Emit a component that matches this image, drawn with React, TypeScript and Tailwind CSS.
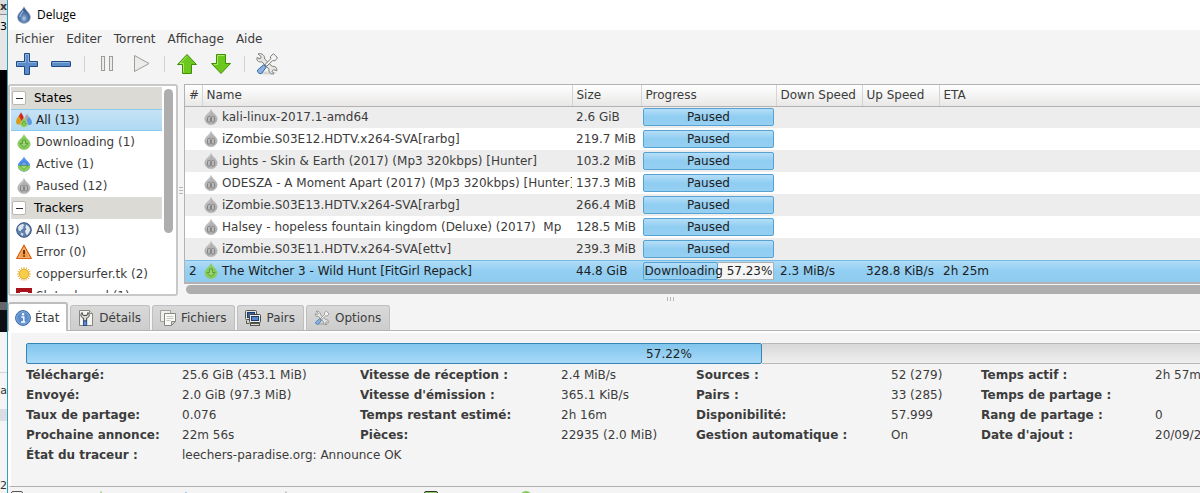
import type { ReactNode } from "react";

type IconProps = { className?: string };

const DROP = "M9 0.8C7.8 4 2.600 7.2 2.600 11.2A6.400 6.200 0 0 0 15.400 11.2C15.400 7.2 10.2 4 9 0.8Z";
const SMALL_DROP = "M8 0.5C7 3.8 1.800 6 1.800 10A6.200 5.700 0 0 0 14.200 10C14.200 6 9 3.8 8 0.5Z";

function DelugeLogo() {
  return (
    <svg className="size-[18px]" viewBox="0 0 18 18" aria-hidden="true">
      <defs>
        <radialGradient id="logo" cx="0.5" cy="0.7" r="0.6">
          <stop offset="0" stopColor="#b9d0ea" />
          <stop offset="0.35" stopColor="#6388b8" />
          <stop offset="1" stopColor="#274a80" />
        </radialGradient>
      </defs>
      <path d={DROP} fill="url(#logo)" stroke="#a8b4c4" strokeWidth="0.7" />
      <path d="M8.3 4.5C7 7 5 8.5 4.8 11" fill="none" stroke="#9db9dc" strokeWidth="1.1" />
    </svg>
  );
}

function PausedDrop({ className = "size-4" }: IconProps) {
  return (
    <svg className={className} viewBox="0 0 16 16" aria-hidden="true">
      <path d={SMALL_DROP} fill="#b2b2b2" stroke="#b4b4b4" strokeWidth="0.6" />
      <path d="M8 1.5C7 4.5 3.4 7 3.2 9.6" fill="none" stroke="#cacaca" strokeWidth="0.9" />
      <rect x="4.5" y="7.5" width="3" height="5.500" rx="1" fill="#b8b8b8" stroke="#858585" strokeWidth="1" />
      <rect x="8.5" y="7.5" width="3" height="5.500" rx="1" fill="#b8b8b8" stroke="#858585" strokeWidth="1" />
    </svg>
  );
}

function DownDrop({ className = "size-4" }: IconProps) {
  return (
    <svg className={className} viewBox="0 0 16 16" aria-hidden="true">
      <path d={SMALL_DROP} fill="#86cc58" stroke="#93c974" strokeWidth="0.6" />
      <path d="M6.5 6h3v3.500H12L8 13.5 4 9.5h2.5z" fill="#9bd670" stroke="#5c9440" strokeWidth="0.900" strokeLinejoin="round" />
    </svg>
  );
}

function ActiveDrop() {
  return (
    <svg className="size-4" viewBox="0 0 16 16" aria-hidden="true">
      <path d={SMALL_DROP} fill="#4f92ee" />
      <path d="M1.8 9.600H14.200A6.200 6 0 0 1 1.8 9.600Z" fill="#8ccf55" />
      <path d="M8 5.2L12 9.400H4Z" fill="#6fa9f2" stroke="#3c68a8" strokeWidth="0.8" strokeLinejoin="round" />
      <path d="M8 13.600L4 9.700H12Z" fill="#a3dd74" stroke="#629a45" strokeWidth="0.8" strokeLinejoin="round" />
    </svg>
  );
}

function AllDrops() {
  return (
    <svg className="size-4" viewBox="0 0 16 16" aria-hidden="true">
      <path d="M11 1.4C10.5 3 8.6 4.6 8.6 7a2.5 2.5 0 0 0 5 0C13.6 4.6 11.5 3 11 1.4Z" fill="#a9a9b4" />
      <path d="M5 0.3C4.5 2 2.3 4 2.3 6.4a2.8 2.8 0 0 0 5.6 0C7.9 4 5.5 2 5 0.3Z" fill="#d8231f" />
      <path d="M2.7 3.6C2.2 5.4 0 7.2 0 9.8a2.8 2.8 0 0 0 5.6 0C5.6 7.2 3.2 5.4 2.7 3.6Z" fill="#d99a1c" />
      <path d="M13.1 4.6C12.6 6.2 10.4 7.8 10.4 10.2a2.8 2.8 0 0 0 5.6 0C16 7.8 13.6 6.2 13.1 4.6Z" fill="#5f97e4" />
      <path d="M8 5.5C7.4 7.8 4.6 9.2 4.6 12a3.4 3.2 0 0 0 6.8 0C11.4 9.2 8.6 7.8 8 5.5Z" fill="#86cf50" stroke="#b9e39c" strokeWidth="0.5" />
      <path d="M7.2 9.5h1.6v2H10L8 13.6 6 11.5h1.2z" fill="#b0e28a" stroke="#4d8a2a" strokeWidth="0.6" />
    </svg>
  );
}

function Globe() {
  return (
    <svg className="size-4" viewBox="0 0 16 16" aria-hidden="true">
      <circle cx="8" cy="8" r="7.3" fill="#5f80ad" stroke="#34527f" strokeWidth="1" />
      <path d="M2 5.5C3 3 5 2 7 1.9L8.5 3.2 7 4.5 7.6 6 5.6 7.6 4.5 9.2 2.6 8.6Z" fill="#dce4ee" />
      <path d="M10 2.6L13 4.8 14.2 8 12.8 11 11 13.2 9.6 11.2 9 9 10.5 7.2 9.4 5.4Z" fill="#e6ebf2" />
      <path d="M4.8 10.4L7.5 11.4 7 14 4.8 13Z" fill="#cfd9e6" />
    </svg>
  );
}

function Warning() {
  return (
    <svg className="size-4" viewBox="0 0 16 16" aria-hidden="true">
      <path d="M8 1.2L15.3 14.5H0.7Z" fill="#f6963f" stroke="#d45f0a" strokeWidth="1.2" strokeLinejoin="round" />
      <path d="M8 3.6L13.4 13.4H2.6Z" fill="none" stroke="#fbc795" strokeWidth="0.7" />
      <rect x="7.2" y="6" width="1.7" height="4.3" rx="0.6" fill="#33261a" />
      <rect x="7.2" y="11.2" width="1.7" height="1.6" rx="0.6" fill="#33261a" />
    </svg>
  );
}

function Sun() {
  const rays = Array.from({ length: 16 }, (_, i) => {
    const a = (i * Math.PI) / 8;
    return { x: 8 + Math.cos(a) * 6.9, y: 8 + Math.sin(a) * 6.9 };
  });
  return (
    <svg className="size-4" viewBox="0 0 16 16" aria-hidden="true">
      {rays.map((r, i) => (
        <line key={i} x1="8" y1="8" x2={r.x} y2={r.y} stroke="#e3ae2c" strokeWidth="1" />
      ))}
      <circle cx="8" cy="8" r="4.7" fill="#f6ce48" stroke="#e0a92a" strokeWidth="0.8" />
    </svg>
  );
}

function RedBadge() {
  return (
    <svg className="size-4" viewBox="0 0 16 16" aria-hidden="true">
      <rect width="16" height="16" fill="#a8121a" />
      <path d="M4 4h8v3H9v6H7V7H4z" fill="#fff" />
    </svg>
  );
}

function Plus() {
  return (
    <svg className="size-6" viewBox="0 0 24 24" aria-hidden="true">
      <path d="M9.5 1.5h5v8h8v5h-8v8h-5v-8h-8v-5h8z" fill="#5b8cc6" stroke="#204a87" strokeLinejoin="round" />
      <path d="M10.5 10.5v-8h3v8h8M2.5 13.5v-3h8" fill="none" stroke="#8db3df" />
    </svg>
  );
}

function Minus() {
  return (
    <svg className="size-6" viewBox="0 0 24 24" aria-hidden="true">
      <rect x="2.5" y="9.5" width="19" height="5" rx="0.5" fill="#5b8cc6" stroke="#204a87" />
      <path d="M3.5 10.5h17" stroke="#8db3df" />
    </svg>
  );
}

function PauseGlyph() {
  return (
    <svg className="size-6" viewBox="0 0 24 24" aria-hidden="true">
      <rect x="6.5" y="4.5" width="3" height="14" fill="#ececea" stroke="#9b9d98" />
      <rect x="14.5" y="4.5" width="3" height="14" fill="#ececea" stroke="#9b9d98" />
    </svg>
  );
}

function PlayGlyph() {
  return (
    <svg className="size-6" viewBox="0 0 24 24" aria-hidden="true">
      <path d="M5.5 3.5v16L20 11.5z" fill="#ececea" stroke="#9b9d98" strokeLinejoin="round" />
    </svg>
  );
}

function ArrowUp() {
  return (
    <svg className="size-6" viewBox="0 0 24 24" aria-hidden="true">
      <path d="M12 2.5L21.5 12.5H16.5V21.5H7.5V12.5H2.5Z" fill="#6cc81c" stroke="#3f8f05" strokeLinejoin="round" />
      <path d="M12 4.2L5 11.5H8.5V20.5" fill="none" stroke="#a9e66c" />
    </svg>
  );
}

function ArrowDown() {
  return (
    <svg className="size-6" viewBox="0 0 24 24" aria-hidden="true">
      <path d="M12 21.5L21.5 11.5H16.5V2.5H7.5V11.5H2.5Z" fill="#6cc81c" stroke="#3f8f05" strokeLinejoin="round" />
      <path d="M5 12.5H8.5V3.5H15.5" fill="none" stroke="#a9e66c" />
    </svg>
  );
}

function Tools({ className = "size-6" }: IconProps) {
  return (
    <svg className={className} viewBox="0 0 24 24" aria-hidden="true">
      <ellipse cx="13" cy="21" rx="8" ry="1.6" fill="#000" opacity="0.12" />
      <path
        d="M3 1.8L6.2 4.8 5.2 6.8 2 5.6C1.2 8.4 3.6 10.6 6.8 9.8L14 17.2C13.4 20 15.6 22.6 18.8 21.8L17 19.2 18.6 17.6 21.8 18.8C22.4 16 20 13.8 17.2 14.4L9.6 7C10.2 3.6 6.6 0.8 3 1.8Z"
        fill="#e6e6e3"
        stroke="#7b7d78"
        strokeLinejoin="round"
      />
      <path
        d="M18.400 1.800L15.400 4.600 15.800 6.800 10 12.6 11.8 14.2 17.6 8.600 20 8.800 22.400 6 20.600 3.600Z"
        fill="#f5f5f3"
        stroke="#7b7d78"
        strokeLinejoin="round"
      />
      <path d="M8.6 12.8L11.2 15.2 6.8 21.2C4.8 22.6 1.6 20.4 2.6 18Z" fill="#8cb2e0" stroke="#3465a4" strokeLinejoin="round" />
    </svg>
  );
}

function InfoIcon() {
  return (
    <svg className="size-4" viewBox="0 0 16 16" aria-hidden="true">
      <circle cx="8" cy="8" r="7.4" fill="#5b8ccb" stroke="#3565a4" />
      <circle cx="8" cy="8" r="6.3" fill="none" stroke="#92b6e2" strokeWidth="0.8" />
      <path d="M6.3 7h2.5v4.6M6 12h4.3" fill="none" stroke="#fff" strokeWidth="1.4" />
      <circle cx="8" cy="4.3" r="1.2" fill="#fff" />
    </svg>
  );
}

function DetailsIcon() {
  return (
    <svg className="size-4" viewBox="0 0 16 16" aria-hidden="true">
      <path d="M1.5 0.5h10l3 3v12h-13z" fill="#f4f4f2" stroke="#85877f" />
      <path d="M11.5 0.5v3h3" fill="#ddd" stroke="#85877f" />
      <path d="M4 2.5C2 4.5 3 7.8 5.6 8.2V11h3V8.2C11.4 7.8 12 4.5 10 2.5L9 5.4H5Z" fill="#d8d8d5" stroke="#444641" strokeLinejoin="round" />
      <rect x="5.5" y="11" width="3.2" height="4.5" fill="#5b8cc6" stroke="#204a87" strokeWidth="0.9" />
    </svg>
  );
}

function FilesIcon() {
  return (
    <svg className="size-4" viewBox="0 0 16 16" aria-hidden="true">
      <path d="M0.5 0.5h10v11h-10z" fill="#eeeeec" stroke="#a0a29c" />
      <path d="M4.5 3.5h11v8l-4 4h-7z" fill="#fafaf9" stroke="#85877f" />
      <path d="M6.5 6.5h7M6.5 8.5h7M6.5 10.5h4" stroke="#c4c6c0" />
      <path d="M15.5 11.5h-4v4z" fill="#d3d3d0" stroke="#85877f" strokeLinejoin="round" />
    </svg>
  );
}

function PeersIcon() {
  return (
    <svg className="size-4" viewBox="0 0 16 16" aria-hidden="true">
      <rect x="0.5" y="0.5" width="11" height="9" rx="1" fill="#e4e4e2" stroke="#55574f" />
      <rect x="2.5" y="2.5" width="7" height="5" fill="#37609c" stroke="#1d3c6c" />
      <path d="M1.5 10.5v3h3" fill="none" stroke="#55574f" />
      <rect x="4.5" y="4.5" width="11" height="8" rx="1" fill="#eeeeec" stroke="#44463f" />
      <rect x="6.5" y="6.5" width="7" height="4" fill="#5688cc" stroke="#1d3c6c" />
      <rect x="5.5" y="13.5" width="9" height="2" fill="#ddd" stroke="#55574f" />
    </svg>
  );
}

type Filter = { label: string; icon: ReactNode; selected?: boolean };

const groups: { title: string; items: Filter[] }[] = [
  {
    title: "States",
    items: [
      { label: "All (13)", icon: <AllDrops />, selected: true },
      { label: "Downloading (1)", icon: <DownDrop /> },
      { label: "Active (1)", icon: <ActiveDrop /> },
      { label: "Paused (12)", icon: <PausedDrop /> },
    ],
  },
  {
    title: "Trackers",
    items: [
      { label: "All (13)", icon: <Globe /> },
      { label: "Error (0)", icon: <Warning /> },
      { label: "coppersurfer.tk (2)", icon: <Sun /> },
      { label: "Slutor.broad (1)", icon: <RedBadge /> },
    ],
  },
];

type Torrent = {
  name: string;
  size: string;
  status: string;
  progress: number;
  order?: string;
  down?: string;
  up?: string;
  eta?: string;
};

const torrents: Torrent[] = [
  { name: "kali-linux-2017.1-amd64", size: "2.6 GiB", status: "Paused", progress: 100 },
  { name: "iZombie.S03E12.HDTV.x264-SVA[rarbg]", size: "219.7 MiB", status: "Paused", progress: 100 },
  { name: "Lights - Skin & Earth (2017) (Mp3 320kbps) [Hunter]", size: "103.2 MiB", status: "Paused", progress: 100 },
  { name: "ODESZA - A Moment Apart (2017) (Mp3 320kbps) [Hunter]", size: "137.3 MiB", status: "Paused", progress: 100 },
  { name: "iZombie.S03E13.HDTV.x264-SVA[rarbg]", size: "266.4 MiB", status: "Paused", progress: 100 },
  { name: "Halsey - hopeless fountain kingdom (Deluxe) (2017)  Mp", size: "128.5 MiB", status: "Paused", progress: 100 },
  { name: "iZombie.S03E11.HDTV.x264-SVA[ettv]", size: "239.3 MiB", status: "Paused", progress: 100 },
  {
    order: "2",
    name: "The Witcher 3 - Wild Hunt [FitGirl Repack]",
    size: "44.8 GiB",
    status: "Downloading 57.23%",
    progress: 57.23,
    down: "2.3 MiB/s",
    up: "328.8 KiB/s",
    eta: "2h 25m",
  },
];

const stats: [string, string][][] = [
  [["Téléchargé:", "25.6 GiB (453.1 MiB)"], ["Vitesse de réception :", "2.4 MiB/s"], ["Sources :", "52 (279)"], ["Temps actif :", "2h 57m"]],
  [["Envoyé:", "2.0 GiB (97.3 MiB)"], ["Vitesse d'émission :", "365.1 KiB/s"], ["Pairs :", "33 (285)"], ["Temps de partage :", ""]],
  [["Taux de partage:", "0.076"], ["Temps restant estimé:", "2h 16m"], ["Disponibilité:", "57.999"], ["Rang de partage :", "0"]],
  [["Prochaine annonce:", "22m 56s"], ["Pièces:", "22935 (2.0 MiB)"], ["Gestion automatique :", "On"], ["Date d'ajout :", "20/09/2017"]],
  [["État du traceur :", "leechers-paradise.org: Announce OK"]],
];

function ToolButton({ label, children }: { label: string; children: ReactNode }) {
  return (
    <button type="button" aria-label={label} className="flex h-8 w-[34px] shrink-0 items-center justify-center">
      {children}
    </button>
  );
}

function Separator() {
  return (
    <div className="flex w-3 justify-center">
      <div className="h-4 w-px bg-[#d2d2d2]" />
    </div>
  );
}

function BackgroundEdge() {
  return (
    <div className="flex w-[7px] shrink-0 flex-col overflow-hidden bg-[#f4f4f4] text-[11px] leading-[14px] text-[#333]" aria-hidden="true">
      <div className="flex h-[15px] shrink-0 justify-end border-b border-[#8a8a92] bg-[#dcdcdc] font-bold">x</div>
      <div className="flex h-[55px] shrink-0 justify-end bg-[#e6e6e6] pt-[5px] text-black">13</div>
      <div className="h-[232px] shrink-0 bg-black" />
      <div className="h-2 shrink-0 bg-[#66666a]" />
      <div className="h-[22px] shrink-0 bg-[#0d0f14]" />
      <div className="h-[41px] shrink-0 border-b border-[#d5d5d5]" />
      <div className="flex h-9 shrink-0 items-center justify-end">a</div>
      <div className="h-3 shrink-0 bg-[#dcdde3]" />
      <div className="flex grow items-end justify-end pb-0">2</div>
    </div>
  );
}

function Sidebar() {
  return (
    <nav className="flex w-[170px] shrink-0 gap-[2px] rounded-[3px] border-2 border-[#c8c8c8] bg-white p-px pr-[3px]">
      <div className="h-[206px] min-w-0 flex-1 overflow-hidden">
        {groups.map((g) => (
          <section key={g.title}>
            <h2 className="flex h-[22px] items-center gap-2 bg-[#dbdad5] pl-px text-black">
              <button
                type="button"
                aria-label={`Toggle ${g.title}`}
                className="flex size-[14px] items-center justify-center rounded-[2px] border border-[#b9b8b3] bg-white"
              >
                <span className="h-px w-[7px] bg-[#333]" />
              </button>
              {g.title}
            </h2>
            <ul>
              {g.items.map((it) => (
                <li key={it.label}>
                  <button
                    type="button"
                    className={
                      it.selected
                        ? "flex h-[22px] w-full items-center gap-1 border-y border-[#8ccbf0] bg-linear-to-b from-[#c6e3f5] to-[#afd9f2] pl-[5px] whitespace-nowrap text-[#202020]"
                        : "flex h-[22px] w-full items-center gap-1 pl-[5px] whitespace-nowrap"
                    }
                  >
                    {it.icon}
                    {it.label}
                  </button>
                </li>
              ))}
            </ul>
          </section>
        ))}
      </div>
      <div className="w-[9px] pt-[2px]">
        <div className="h-36 rounded-full bg-[#aeaeae]" />
      </div>
    </nav>
  );
}

function ProgressCell({ t }: { t: Torrent }) {
  return (
    <div className="relative flex h-[18px]">
      <div
        className="rounded-[2px] border border-[#55a2d3] bg-linear-to-b from-[#b5def8] via-[#8fcdf1] to-[#96d0f3]"
        style={{ width: `${t.progress}%` }}
      />
      {t.progress < 100 && <div className="flex-1 border border-l-0 border-[#b0b0b0] bg-[#f5f5f5]" />}
      <span className="absolute inset-0 flex items-center justify-center whitespace-nowrap text-[#222]">{t.status}</span>
    </div>
  );
}

const headers = ["#", "Name", "Size", "Progress", "Down Speed", "Up Speed", "ETA"];

function TorrentTable() {
  return (
    <div className="min-w-0 flex-1">
      <div className="border-2 border-t border-r-0 border-l border-[#b2b2b2]">
        <table className="w-full table-fixed border-collapse">
          <colgroup>
            <col className="w-[17px]" />
            <col className="w-[370px]" />
            <col className="w-[69px]" />
            <col className="w-[135px]" />
            <col className="w-[86px]" />
            <col className="w-[77px]" />
            <col />
          </colgroup>
          <thead>
            <tr className="h-[21px] bg-linear-to-b from-white to-[#e9e8e7]">
              {headers.map((h) => (
                <th
                  key={h}
                  scope="col"
                  className="overflow-hidden border-r border-b border-r-[#d4d4d4] border-b-[#b2b2b2] p-0 pl-1 text-left font-normal whitespace-nowrap last:border-r-0"
                >
                  {h}
                </th>
              ))}
            </tr>
          </thead>
          <tbody>
            {torrents.map((t) => (
              <tr
                key={t.name}
                className={
                  t.order
                    ? "h-[22px] bg-linear-to-b from-[#b3ddf7] via-[#92cff3] to-[#8ecbef] text-[#202020] inset-shadow-[0_1px_0_#74bce8]"
                    : "h-[22px] odd:bg-[#ededed] even:bg-white"
                }
              >
                <td className="p-0 pl-1">{t.order}</td>
                <td className="overflow-hidden p-0">
                  <div className="flex items-center gap-[3px] pl-px whitespace-pre">
                    {t.order ? <DownDrop className="size-4 shrink-0" /> : <PausedDrop className="size-4 shrink-0" />}
                    {t.name}
                  </div>
                </td>
                <td className="p-0 pl-1 whitespace-nowrap">{t.size}</td>
                <td className="px-[2px] py-0">
                  <ProgressCell t={t} />
                </td>
                <td className="p-0 pl-1 whitespace-nowrap">{t.down}</td>
                <td className="p-0 pl-1 whitespace-nowrap">{t.up}</td>
                <td className="p-0 pl-1 whitespace-nowrap">{t.eta}</td>
              </tr>
            ))}
          </tbody>
        </table>
      </div>
      <div className="pt-px pl-[2px]">
        <div className="h-[9px] rounded-l-full bg-[#aeaeae]" />
      </div>
    </div>
  );
}

const tabs = [
  { label: "Détails", icon: <DetailsIcon /> },
  { label: "Fichiers", icon: <FilesIcon /> },
  { label: "Pairs", icon: <PeersIcon /> },
  { label: "Options", icon: <Tools className="size-4" /> },
];

export default function App() {
  return (
    <div className="flex h-screen overflow-hidden bg-[#f4f4f4] font-['DejaVu_Sans',sans-serif] text-[12px] leading-4 text-[#3c3c3c]">
      <BackgroundEdge />
      <main className="flex min-w-0 flex-1 flex-col border-l border-[#2ba3b8]">
        <header className="flex h-[30px] shrink-0 items-center gap-1 bg-white pl-[7px] font-['Open_Sans',sans-serif] text-black">
          <DelugeLogo />
          <h1>Deluge</h1>
        </header>
        <div className="flex h-[18px] shrink-0 items-center gap-3 pl-[7px]">
          {["Fichier", "Editer", "Torrent", "Affichage", "Aide"].map((m) => (
            <button key={m} type="button">
              {m}
            </button>
          ))}
        </div>
        <div className="flex h-9 shrink-0 items-start pl-[2px]">
          <ToolButton label="Ajouter"><Plus /></ToolButton>
          <ToolButton label="Supprimer"><Minus /></ToolButton>
          <div className="flex h-8 items-center"><Separator /></div>
          <ToolButton label="Pause"><PauseGlyph /></ToolButton>
          <ToolButton label="Reprendre"><PlayGlyph /></ToolButton>
          <div className="flex h-8 items-center"><Separator /></div>
          <ToolButton label="Monter"><ArrowUp /></ToolButton>
          <ToolButton label="Descendre"><ArrowDown /></ToolButton>
          <div className="flex h-8 items-center"><Separator /></div>
          <ToolButton label="Préférences"><Tools /></ToolButton>
        </div>

        <div className="flex shrink-0">
          <Sidebar />
          <div className="flex w-[6px] shrink-0 flex-col items-center justify-center gap-[2px]">
            <span className="h-px w-1 bg-[#b8b8b8]" />
            <span className="h-px w-1 bg-[#b8b8b8]" />
            <span className="h-px w-1 bg-[#b8b8b8]" />
          </div>
          <TorrentTable />
        </div>

        <div className="flex h-[6px] w-[1324px] shrink-0 items-center justify-center gap-[2px]">
          <span className="h-1 w-px bg-[#b8b8b8]" />
          <span className="h-1 w-px bg-[#b8b8b8]" />
          <span className="h-1 w-px bg-[#b8b8b8]" />
        </div>

        <div role="tablist" className="flex h-[29px] shrink-0 items-end gap-[2px] border-b border-[#b4b4b4]">
          <button
            type="button"
            role="tab"
            aria-selected="true"
            className="-mb-px flex h-[29px] items-center gap-1 rounded-t-[3px] border-2 border-b-0 border-l border-[#bdbdbd] bg-white pr-[7px] pl-[6px]"
          >
            <InfoIcon />
            État
          </button>
          {tabs.map((t) => (
            <button
              key={t.label}
              type="button"
              role="tab"
              aria-selected="false"
              className="flex h-[25px] items-center gap-[5px] rounded-t-[3px] border border-b-0 border-[#bfbfbf] bg-linear-to-b from-[#d9d9d9] to-[#cdcdcd] pr-2 pl-[7px]"
            >
              {t.icon}
              {t.label}
            </button>
          ))}
        </div>

        <section className="h-[156px] shrink-0 overflow-hidden border-t-2 border-b border-l-3 border-t-white border-b-[#b0b0b0] border-l-white pt-[10px] pl-[15px]">
          <div className="relative flex h-[21px] w-[1286px]">
            <div
              className="rounded-[2px] border border-[#3584b4] bg-linear-to-b from-[#83c5ec] via-[#93cff3] to-[#a9daf8]"
              style={{ width: "57.22%" }}
            />
            <div className="flex-1 border-y border-[#b8b8b8] bg-linear-to-b from-[#d8d8d8] to-[#efefef]" />
            <span className="absolute inset-0 flex items-center justify-center text-[#222]">57.22%</span>
          </div>
          <dl className="w-[1286px] pt-px">
            {stats.map((row) => (
              <div key={row[0][0]} className="grid h-5 grid-cols-[156px_178px_201px_135px_195px_90px_174px_1fr] items-center whitespace-nowrap">
                {row.map(([k, v]) => (
                  <div key={k} className="contents">
                    <dt className="font-bold">{k}</dt>
                    <dd>{v}</dd>
                  </div>
                ))}
              </div>
            ))}
          </dl>
        </section>

        <footer className="grid shrink-0 grid-cols-[82px_85px_100px_146px_96px_1fr] items-start pt-1 pl-[3px]">
          <span className="h-4 w-3 rounded-[2px] border border-[#555]" />
          <DownDrop />
          <ActiveDrop />
          <PausedDrop />
          <span className="h-4 w-[14px] rounded-[2px] border border-[#333] bg-[#8ccf55]" />
          <span className="size-3 rounded-full bg-[#86cc58]" />
        </footer>
      </main>
    </div>
  );
}
